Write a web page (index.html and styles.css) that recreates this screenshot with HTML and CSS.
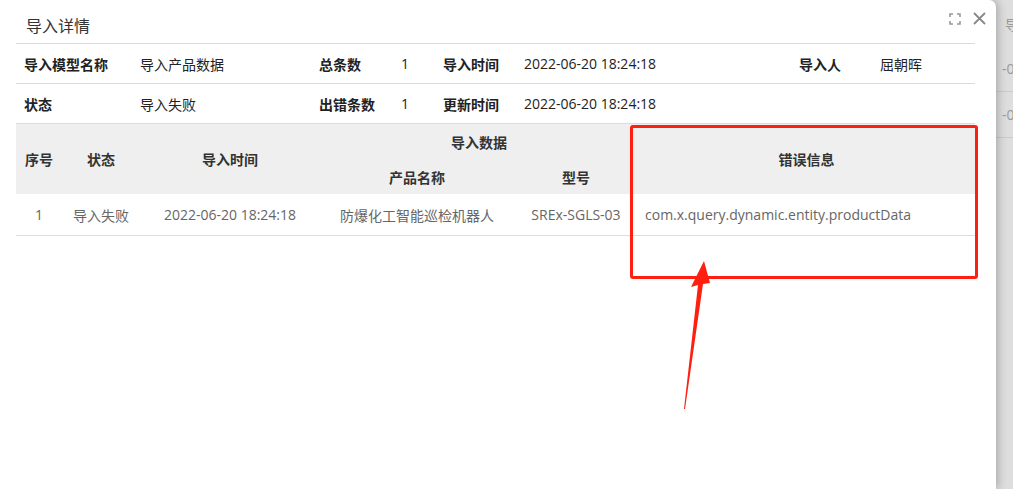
FILE: index.html
```html
<!DOCTYPE html>
<html lang="zh-CN">
<head>
    <meta charset="UTF-8">
    <title>导入详情</title>
    <link rel="stylesheet" href="styles.css">
</head>
<body>
    <!-- Dialog -->
    <div class="dialog">
        <div class="dialog-head">
            <span class="dialog-title">导入详情</span>
            <div class="dialog-tools">
                <svg class="tool-icon" width="12" height="12" viewBox="0 0 12 12">
                    <path d="M1 4V1h3M8 1h3v3M11 8v3H8M4 11H1V8" fill="none" stroke="#999" stroke-width="1.6"/>
                </svg>
                <svg class="tool-icon" width="13" height="13" viewBox="0 0 13 13">
                    <path d="M1 1l11 11M12 1L1 12" fill="none" stroke="#888" stroke-width="1.8"/>
                </svg>
            </div>
        </div>

        <!-- Summary -->
        <div class="info-row">
            <span class="info-label">导入模型名称</span>
            <span>导入产品数据</span>
            <span class="info-label">总条数</span>
            <span>1</span>
            <span class="info-label">导入时间</span>
            <span>2022-06-20 18:24:18</span>
            <span class="info-label">导入人</span>
            <span>屈朝晖</span>
        </div>
        <div class="info-row">
            <span class="info-label">状态</span>
            <span>导入失败</span>
            <span class="info-label">出错条数</span>
            <span>1</span>
            <span class="info-label">更新时间</span>
            <span>2022-06-20 18:24:18</span>
            <span></span>
            <span></span>
        </div>

        <!-- Detail table -->
        <div class="detail-wrap">
            <table class="detail-table">
                <colgroup>
                    <col style="width:46px">
                    <col style="width:78px">
                    <col style="width:180px">
                    <col style="width:194px">
                    <col style="width:124px">
                    <col>
                </colgroup>
                <thead>
                    <tr>
                        <th rowspan="2">序号</th>
                        <th rowspan="2">状态</th>
                        <th rowspan="2">导入时间</th>
                        <th colspan="2">导入数据</th>
                        <th rowspan="2">错误信息</th>
                    </tr>
                    <tr>
                        <th>产品名称</th>
                        <th>型号</th>
                    </tr>
                </thead>
                <tbody>
                    <tr>
                        <td>1</td>
                        <td>导入失败</td>
                        <td>2022-06-20 18:24:18</td>
                        <td>防爆化工智能巡检机器人</td>
                        <td>SREx-SGLS-03</td>
                        <td class="cell-error">com.x.query.dynamic.entity.productData</td>
                    </tr>
                </tbody>
            </table>

            <!-- Annotation -->
            <div class="mark-box"></div>
            <svg class="mark-arrow" width="40" height="160" viewBox="0 0 40 160">
                <polygon points="8,150 22,26 15,28 28,2 34,24 27,25 9,150" fill="#ff1f10"/>
            </svg>
        </div>
    </div>

    <!-- Page behind the dialog -->
    <div class="backdrop">
        <div class="bg-row bg-head">导</div>
        <div class="bg-row">-06</div>
        <div class="bg-row">-06</div>
    </div>
</body>
</html>
```

FILE: styles.css
```css
body {
    margin: 0;
    padding: 0;
    height: 489px;
    overflow: hidden;
    display: flex;
    font-family: "Open Sans", "Noto Sans CJK SC", sans-serif;
    background-color: #dedede;
    color: #333;
}
.dialog {
    width: 996px;
    flex-shrink: 0;
    background-color: #fff;
    border-top-right-radius: 7px;
    box-shadow: 2px 0 10px rgba(0, 0, 0, 0.25);
    padding: 0 21px 0 16px;
    box-sizing: border-box;
    position: relative;
    z-index: 1;
}
.dialog-head {
    height: 44px;
    display: flex;
    justify-content: space-between;
    align-items: center;
    border-bottom: 1px solid #d8dce0;
    box-sizing: border-box;
}
.dialog-title {
    font-family: "Noto Sans CJK SC", sans-serif;
    font-size: 16px;
    color: #333;
    padding-left: 10px;
    margin-top: 6px;
}
.dialog-tools {
    display: flex;
    gap: 12px;
    align-items: center;
    margin-right: -11px;
    margin-top: -6px;
}
.info-row {
    display: grid;
    grid-template-columns: 116px 179px 82px 42px 81px 275px 81px auto;
    height: 40px;
    align-items: center;
    padding-left: 8px;
    border-bottom: 1px solid #d8dce0;
    box-sizing: border-box;
    font-size: 14px;
    color: #222;
}
.info-label {
    font-weight: 600;
}
.detail-wrap {
    position: relative;
}
.detail-table {
    width: 100%;
    border-collapse: collapse;
    table-layout: fixed;
    font-size: 14px;
}
.detail-table th {
    background-color: #efefef;
    font-weight: 600;
    color: #333;
    height: 35px;
    padding: 0;
    text-align: center;
}
.detail-table td {
    height: 41px;
    padding: 0;
    text-align: center;
    color: #666;
    border-bottom: 1px solid #ddd;
    white-space: nowrap;
}
.detail-table .cell-error {
    text-align: left;
    padding-left: 7px;
}
.mark-box {
    position: absolute;
    left: 614px;
    top: 1px;
    width: 342px;
    height: 148px;
    border: 3px solid #ff1f10;
    border-radius: 3px;
}
.mark-arrow {
    position: absolute;
    left: 660px;
    top: 135px;
}
.backdrop {
    flex: 1;
    overflow: hidden;
    font-size: 14px;
    color: #999;
    padding-top: 4px;
}
.bg-row {
    height: 45px;
    line-height: 45px;
    border-bottom: 1px solid #ccc;
    white-space: nowrap;
    padding-left: 6px;
}
.bg-head {
    height: 42px;
    line-height: 42px;
    padding-left: 9px;
    border-bottom: none;
}
```
